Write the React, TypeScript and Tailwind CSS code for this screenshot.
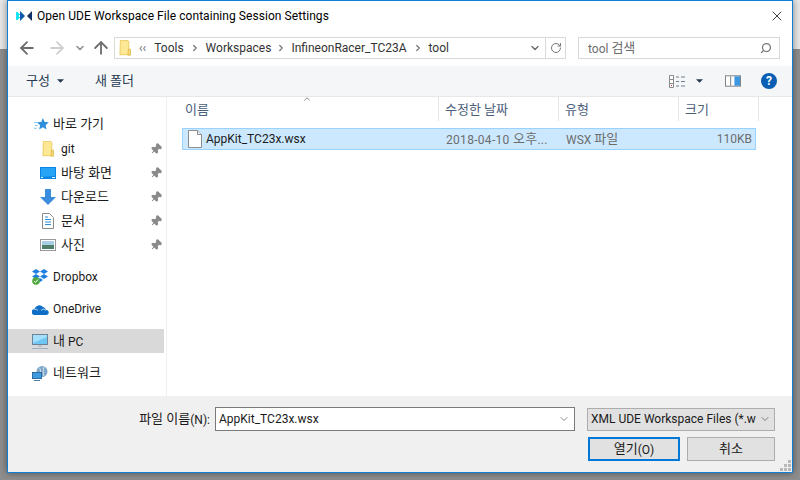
import React from "react";
import { ArrowLeft, ArrowRight, ArrowUp, ChevronDown, ChevronRight, ChevronUp, RotateCw, Search, X, Pin } from "lucide-react";

const FONT = "[font-family:'Roboto','Noto_Sans_CJK_KR',sans-serif]";

// hangul in Noto CJK runs narrower than the reference, so it gets 13px
const K = ({ children }: { children: React.ReactNode }) => <span className="text-[13px] align-[1px]">{children}</span>;

function FolderIcon({ className }: { className?: string }) {
  return (
    <svg viewBox="0 0 14 19" className={className}>
      <path d="M1.500 .5h9l1 1v16h-10.500z" fill="#fde995" stroke="#e8c652" />
      <path d="M11 11h2.500v7h-3z" fill="#f8dd80" stroke="#e0b94a" />
    </svg>
  );
}

const StarIcon = () => (
  <svg viewBox="0 0 16 16" className="w-[15px] h-[15px]">
    <path d="M9.500 1l1.800 4.300 4.500.4-3.400 3 1 4.600-3.900-2.400-4 2.400 1-4.600-3.400-3 4.600-.4z" fill="#2f8fdc" />
    <path d="M0 6h4M1 9h3M0 12h3" stroke="#7cc4f0" />
  </svg>
);

const DesktopIcon = () => (
  <svg viewBox="0 0 16 12" className="w-4 h-3">
    <rect width="16" height="12" fill="#0a84e6" />
    <path d="M1 1h14v8l-14 1z" fill="#27a4f6" />
    <path d="M1 10.500h2M12 10.500h3" stroke="#e9f6ff" />
  </svg>
);

const DownloadIcon = () => (
  <svg viewBox="0 0 16 16" className="w-4 h-4">
    <path d="M5 0h6v8h5l-8 8-8-8h5z" fill="#3b8ede" />
  </svg>
);

const DocIcon = () => (
  <svg viewBox="0 0 12 16" className="w-3 h-4 ml-[2px]">
    <path d="M.5 .5h7l4 4v11h-11z" fill="#fff" stroke="#8c8c8c" />
    <path d="M3 4h3M3 6.500h6M3 9h6M3 11.500h6" stroke="#2f8fdc" />
  </svg>
);

const PictureIcon = () => (
  <svg viewBox="0 0 16 12" className="w-4 h-3">
    <rect x=".5" y=".5" width="15" height="11" fill="#fff" stroke="#9a9a9a" />
    <rect x="2" y="2" width="12" height="4" fill="#a9cfe8" />
    <rect x="2" y="6" width="12" height="4" fill="#4f7f66" />
  </svg>
);

const DropboxIcon = () => (
  <svg viewBox="0 0 16 16" className="w-4 h-4">
    <path d="M4 0l4 2.500L4 5 0 2.500zM12 0l4 2.500L12 5 8 2.500zM4 5l4 2.500L4 10 0 7.500zM12 5l4 2.500L12 10 8 7.500zM8 9l3 2-3 2-3-2z" fill="#1f7fe0" />
    <circle cx="4" cy="12" r="3.800" fill="#4fa83d" />
    <path d="M2 12l1.500 1.500L6 10.500" stroke="#fff" fill="none" />
  </svg>
);

const CloudIcon = () => (
  <svg viewBox="0 0 17 11" className="w-[17px] h-[11px]">
    <path d="M3 11a3 3 0 0 1-.5-6A5 5 0 0 1 11 3a3.500 3.500 0 0 1 3 3 2.500 2.500 0 0 1 .5 5z" fill="#0f6fc6" />
    <path d="M2.500 5.500A3 3 0 0 1 6 6.500M9 6.500a3 3 0 0 1 5 0" stroke="#fff" fill="none" strokeWidth=".7" />
  </svg>
);

const PcIcon = () => (
  <svg viewBox="0 0 16 15" className="w-4 h-[15px]">
    <rect x=".5" y=".5" width="15" height="10" fill="#6fc6f5" stroke="#6d8296" />
    <path d="M1 1h14v2L1 9z" fill="#a4e0fb" />
    <path d="M6 12h4M0 14.500h16" stroke="#9db0c0" />
  </svg>
);

const NetworkIcon = () => (
  <svg viewBox="0 0 16 15" className="w-4 h-[15px]">
    <circle cx="10" cy="5.500" r="5.500" fill="#7fa8c8" />
    <path d="M7 1.500c2 2 2 5 0 8M12 1c-1 3-1 6 0 9" stroke="#d3e4ef" fill="none" />
    <rect x=".5" y="6.500" width="9" height="6" fill="#3d9ade" stroke="#2f6d9e" />
    <path d="M2 14.500h6" stroke="#4d7ea6" />
  </svg>
);

const LogoIcon = () => (
  <svg viewBox="0 0 16 10" className="w-4 h-[10px]">
    <path d="M0 1h2v1h1v6H2v1H0z" fill="#19e3f2" />
    <path d="M4 0l5 5-5 5z" fill="#0b57a8" />
    <path d="M2 3h2v1H2zM2 6h2v1H2z" fill="#19e3f2" />
    <path d="M16 0v10l-5-5z" fill="#12305f" />
  </svg>
);

const ViewsIcon = () => (
  <svg viewBox="0 0 17 13" className="w-[17px] h-[13px]">
    <path d="M.5 .5h4v12h-4z" fill="#fff" stroke="#8a8a8a" />
    <path d="M1 4.500h3M1 8.500h3" stroke="#8a8a8a" />
    <rect x="2" y="10" width="1" height="1" fill="#d33" />
    <path d="M7 2h3M12 2h4M7 6.500h3M12 6.500h4M7 11h3M12 11h4" stroke="#6f7f90" />
  </svg>
);

const PreviewIcon = () => (
  <svg viewBox="0 0 17 12" className="w-4 h-3">
    <rect x=".5" y=".5" width="16" height="11" fill="#fff" stroke="#7c7c7c" />
    <path d="M6 1v10" stroke="#7c7c7c" />
    <rect x="10" y="1" width="6" height="10" fill="#3d96e0" />
  </svg>
);

const FileIcon = () => (
  <svg viewBox="0 0 14 18" className="w-[14px] h-[18px]">
    <path d="M.5 .5h9l4 4v13h-13z" fill="#fff" stroke="#8c8c8c" />
    <path d="M9.500 .5v4h4" fill="#f0f0f0" stroke="#8c8c8c" />
  </svg>
);

const CaretDown = ({ className }: { className?: string }) => (
  <svg viewBox="0 0 8 4" className={className}>
    <path d="M0 0h8L4 4z" fill="#263a52" />
  </svg>
);

const quick = [
  { label: "git", icon: <FolderIcon className="w-3 h-4 ml-[2px]" /> },
  { label: <K>바탕 화면</K>, icon: <DesktopIcon /> },
  { label: <K>다운로드</K>, icon: <DownloadIcon /> },
  { label: <K>문서</K>, icon: <DocIcon /> },
  { label: <K>사진</K>, icon: <PictureIcon /> },
];

const columns = [
  { label: "이름", width: "w-[257px]", pad: "pl-[3px]" },
  { label: "수정한 날짜", width: "w-[120px]", pad: "pl-[6px]" },
  { label: "유형", width: "w-[120px]", pad: "pl-[6px]" },
  { label: "크기", width: "w-[80px]", pad: "pl-[6px]" },
];

function NavRow({ icon, label, active, className }: { icon: React.ReactNode; label: React.ReactNode; active?: boolean; className?: string }) {
  return (
    <div className={`flex items-center h-6 w-[156px] ${active ? "bg-[#d9d9d9]" : ""} ${className ?? "pl-6"}`}>
      <div className="w-[21px] flex justify-start">{icon}</div>
      <span className="text-[#1a1a1a]">{label}</span>
    </div>
  );
}

export default function App() {
  return (
    <div className={`w-[800px] h-[480px] overflow-hidden bg-[linear-gradient(#e6e6e6_0,#e6e6e6_49px,#8e8e8e_49px)] pl-[7px] text-[12px] leading-none ${FONT}`}>
      <div className="w-[786px] h-[473px] border border-[#0c7fd8] bg-white flex flex-col shadow-[0_0_7px_rgba(0,0,0,0.45)]">
        {/* title bar */}
        <div className="h-[30px] shrink-0 flex items-center pl-[8px] pr-[7px]">
          <LogoIcon />
          <span className="ml-[5px] text-black tracking-[0.06px]">Open UDE Workspace File containing Session Settings</span>
          <X className="ml-auto w-4 h-4 text-[#111]" strokeWidth={1.2} />
        </div>

        {/* nav row */}
        <div className="h-[35px] pb-px shrink-0 flex items-center pl-[9px]">
          <ArrowLeft className="w-5 h-5 text-[#6d6d6d]" strokeWidth={2.2} />
          <ArrowRight className="ml-[10px] w-5 h-5 text-[#cfcfcf]" strokeWidth={2.2} />
          <ChevronDown className="ml-[7px] w-3 h-3 text-[#8d8d8d]" strokeWidth={3} />
          <ArrowUp className="ml-[5px] w-5 h-5 text-[#6d6d6d]" strokeWidth={2.2} />
          <div className="ml-[3px] w-[452px] h-[22px] border border-[#d9d9d9] flex items-center pl-[4px]">
            <FolderIcon className="w-3 h-[16px]" />
            <span className="ml-[8px] text-[#666]">‹‹</span>
            <span className="ml-[8px] text-[#333]">Tools</span>
            <ChevronRight className="ml-[6px] mr-[6px] w-[10px] h-[10px] text-[#777]" strokeWidth={3} />
            <span className="text-[#333]">Workspaces</span>
            <ChevronRight className="ml-[5px] mr-[5px] w-[10px] h-[10px] text-[#777]" strokeWidth={3} />
            <span className="text-[#333]">InfineonRacer_TC23A</span>
            <ChevronRight className="ml-[6px] mr-[6px] w-[10px] h-[10px] text-[#777]" strokeWidth={3} />
            <span className="text-[#333]">tool</span>
            <ChevronDown className="ml-auto mr-[4px] w-3 h-3 text-[#666]" strokeWidth={2.5} />
            <div className="w-[20px] h-full border-l border-[#d9d9d9] flex items-center justify-center">
              <RotateCw className="w-3 h-3 text-[#777]" strokeWidth={2} />
            </div>
          </div>
          <div className="ml-[12px] w-[202px] h-[22px] border border-[#d9d9d9] flex items-center pl-[9px] pr-[7px]">
            <span className="text-[#6d6d6d]">tool <K>검색</K></span>
            <Search className="ml-auto w-3 h-3 text-[#777] -scale-x-100" strokeWidth={2.5} />
          </div>
        </div>

        {/* toolbar */}
        <div className="h-[31px] shrink-0 bg-[#f5f6f7] border-b border-[#e8e8e8] flex items-center pl-[18px] pr-[15px]">
          <span className="text-[#263a52]"><K>구성</K></span>
          <CaretDown className="ml-[7px] w-[7px] h-[4px]" />
          <span className="ml-[31px] text-[#263a52]"><K>새 폴더</K></span>
          <div className="ml-auto flex items-center">
            <ViewsIcon />
            <CaretDown className="ml-[10px] w-[7px] h-[4px]" />
            <div className="ml-[22px]"><PreviewIcon /></div>
            <div className="ml-[20px] w-4 h-4 rounded-full bg-[#0a5fb4] text-white font-bold text-[12px] flex items-center justify-center">?</div>
          </div>
        </div>

        {/* body */}
        <div className="flex-1 flex min-h-0">
          <div className="w-[159px] shrink-0 border-r border-[#f0f0f0] pt-[15px]">
            <div className="flex items-center h-6 pl-[26px]">
              <StarIcon />
              <span className="ml-[4px] text-[#1a1a1a]"><K>바로 가기</K></span>
            </div>
            <div className="mt-px flex flex-col">
              {quick.map((q, i) => (
                <div key={i} className="relative">
                  <NavRow icon={q.icon} label={q.label} className="pl-[32px]" />
                  <Pin className="absolute right-[4px] top-[6px] w-3 h-3 text-[#8a8a8a] rotate-45 fill-[#8a8a8a]" />
                </div>
              ))}
            </div>
            <NavRow icon={<DropboxIcon />} label="Dropbox" className="pl-6 mt-2" />
            <NavRow icon={<CloudIcon />} label="OneDrive" className="pl-6 mt-2" />
            <NavRow icon={<PcIcon />} label={<><K>내</K> PC</>} active className="pl-6 mt-2" />
            <NavRow icon={<NetworkIcon />} label={<K>네트워크</K>} className="pl-6 mt-2" />
          </div>

          <div className="flex-1 pl-[15px] relative">
            <ChevronUp className="absolute left-[135px] -top-[3px] w-[10px] h-[10px] text-[#777]" strokeWidth={2} />
            <div className="flex h-[24px]">
              {columns.map((c) => (
                <div key={c.label} className={`${c.width} ${c.pad} border-r border-[#e5e5e5] flex items-center text-[#4c607a]`}>
                  <K>{c.label}</K>
                </div>
              ))}
            </div>
            <div className="mt-[7px] w-[574px] h-[22px] bg-[#cce8ff] border border-[#99d1ff] flex items-center text-[#6d6d6d]">
              <div className="w-[263px] flex items-center pl-[5px]">
                <FileIcon />
                <span className="ml-[4px] text-[#1a1a1a]">AppKit_TC23x.wsx</span>
              </div>
              <span className="w-[120px] tracking-[0.3px]">2018-04-10 <K>오후</K>...</span>
              <span className="w-[80px]">WSX <K>파일</K></span>
              <span className="flex-1 text-right pr-[3px]">110KB</span>
            </div>
          </div>
        </div>

        {/* footer */}
        <div className="h-[76px] shrink-0 bg-[#f0f0f0] relative pt-[11px] pr-[17px] flex flex-col items-end">
          <div className="flex items-center h-6">
            <span className="text-[#1a1a1a] mr-[5px]"><K>파일 이름</K>(N):</span>
            <div className="w-[360px] h-6 bg-white border border-[#7a7a7a] flex items-center pl-[3px] pr-[4px] text-[#1a1a1a]">
              AppKit_TC23x.wsx
              <ChevronDown className="ml-auto w-3 h-3 text-[#666]" strokeWidth={1.5} />
            </div>
            <div className="ml-[12px] w-[188px] h-[23px] bg-[#e1e1e1] border border-[#adadad] flex items-center pl-[3px] pr-[3px] text-[#1a1a1a]">
              <span className="whitespace-nowrap">XML UDE Workspace Files (*.w</span>
              <ChevronDown className="ml-auto shrink-0 w-3 h-3 text-[#555]" strokeWidth={1.5} />
            </div>
          </div>
          <div className="flex mt-[6px]">
            <button className="w-[92px] h-6 bg-[#e1e1e1] border-2 border-[#0078d7] text-[#1a1a1a]"><K>열기</K>(O)</button>
            <button className="ml-[7px] w-[88px] h-6 bg-[#e1e1e1] border border-[#adadad] text-[#1a1a1a]"><K>취소</K></button>
          </div>
          <div className="absolute right-[1px] bottom-[1px] grid grid-cols-3 gap-px w-[11px]">
            <span /><span /><span className="h-[3px] bg-[#b8b8b8]" />
            <span /><span className="h-[3px] bg-[#b8b8b8]" /><span className="h-[3px] bg-[#b8b8b8]" />
            <span className="h-[3px] bg-[#b8b8b8]" /><span className="h-[3px] bg-[#b8b8b8]" /><span className="h-[3px] bg-[#b8b8b8]" />
          </div>
        </div>
      </div>
    </div>
  );
}
